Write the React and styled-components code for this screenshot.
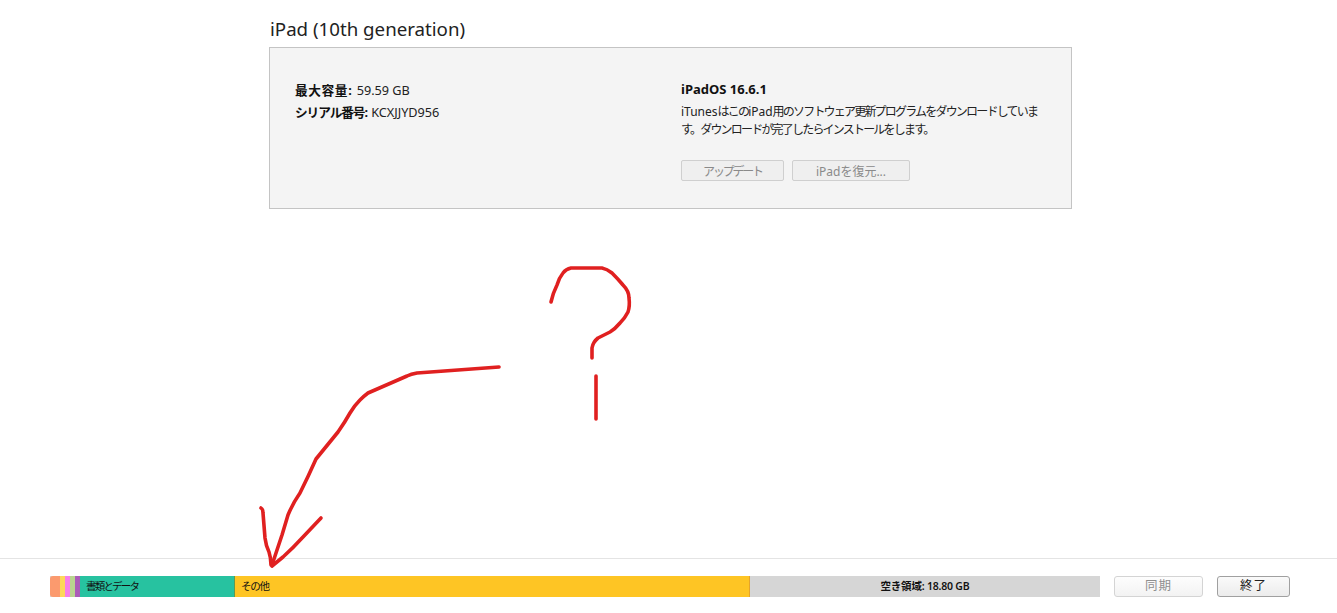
import React from 'react'
import styled, { createGlobalStyle } from 'styled-components'

const GlobalStyle = createGlobalStyle`
  html, body {
    margin: 0;
    padding: 0;
    background: #fff;
    overflow: hidden;
  }
  body {
    font-family: "Noto Sans", "Noto Sans CJK JP", sans-serif;
    color: #111;
  }
`

const segments = [
  { label: '', width: 9.5, color: '#fb9a6e', first: true },
  { label: '', width: 5.5, color: '#fdd85a' },
  { label: '', width: 5, color: '#f77fe8' },
  { label: '', width: 5, color: '#b9d58f' },
  { label: '', width: 5, color: '#ab5cb8' },
  { label: '書類とデータ', width: 155, color: '#27c2a0', edge: '#5f9a52', spacing: -1.8 },
  { label: 'その他', width: 515, color: '#fec524', edge: '#e5a42a', spacing: -1.2 },
]

export default function App() {
  return (
    <Page>
      <GlobalStyle />
      <Main>
        <Title>iPad (10th generation)</Title>
        <Panel>
          <Column>
            <InfoLine><Label $spacing={0.6}>最大容量:</Label> 59.59 GB</InfoLine>
            <InfoLine><Label $spacing={-1.1}>シリアル番号:</Label> KCXJJYD956</InfoLine>
          </Column>
          <Column>
            <OsName>iPadOS 16.6.1</OsName>
            <Message>
              <Latin>iTunes</Latin>はこの<Latin>iPad</Latin>用のソフトウェア更新プログラムをダウンロードしています。ダウンロードが完了したらインストールをします。
            </Message>
            <PanelButtons>
              <PanelButton $w={103} $spacing={-2.2}>アップデート</PanelButton>
              <PanelButton $w={118}>iPadを復元...</PanelButton>
            </PanelButtons>
          </Column>
        </Panel>
      </Main>

      <Footer>
        <StorageBar>
          {segments.map((s, i) => (
            <Segment key={i} $w={s.width} $color={s.color} $edge={s.edge} $first={s.first} $spacing={s.spacing}>
              {s.label}
            </Segment>
          ))}
          <FreeSpace>空き領域: 18.80 GB</FreeSpace>
        </StorageBar>
        <FooterButton $w={89} disabled>同期</FooterButton>
        <FooterButton $w={73} $active>終了</FooterButton>
      </Footer>

      <Scribble viewBox="0 0 1337 613" width="1337" height="613" fill="none">
        <path d="M499 367 L417 373 Q411 374 407 376 L368 393 Q364 396 360 400 Q354 406 350 413 Q345 422 338 432 L316 459 Q308 477 300 493 Q293 503 288 515 Q285 525 282 535 L272 565" />
        <path d="M261 508 Q263 509 263 513 L265 538 Q266 546 269 552 Q271 558 271 565" />
        <path d="M321 518 L303 537 Q293 548 283 557 L272 566" />
        <path d="M551 302 Q553 293 557 285 Q559 278 563 273 Q566 269 571 268 L602 268 Q607 269 612 273 Q618 279 623 285 Q629 291 629 298 Q630 306 628 312 Q625 318 620 323 Q615 329 610 332 Q604 335 598 338 Q593 342 592 348 L592 358" />
        <path d="M596 376 L596 419" />
      </Scribble>
    </Page>
  )
}

const Page = styled.div`
  position: relative;
  width: 1337px;
  height: 613px;
  display: flex;
  flex-direction: column;
  justify-content: space-between;
`

const Main = styled.main`
  padding: 15px 0 0 269px;
  width: 803px;
`

const Title = styled.h1`
  margin: 0 0 5px 1px;
  font-size: 18.7px;
  font-weight: 400;
  line-height: 27px;
  color: #222;
`

const Panel = styled.section`
  box-sizing: border-box;
  width: 803px;
  height: 162px;
  padding: 32px 24px 0 25px;
  display: grid;
  grid-template-columns: 386px 1fr;
  background: #f4f4f4;
  border: 1px solid #c4c4c4;
`

const Column = styled.div`
  display: flex;
  flex-direction: column;
`

const InfoLine = styled.div`
  height: 22px;
  font-size: 12.7px;
  line-height: 20px;
  color: #222;
`

const Label = styled.b`
  font-weight: 700;
  color: #111;
  margin-right: 1px;
  letter-spacing: ${p => p.$spacing || 0}px;
`

const OsName = styled.div`
  font-size: 13px;
  font-weight: 700;
  line-height: 18px;
  margin-bottom: 5px;
`

const Message = styled.p`
  margin: 0;
  width: 366px;
  font-size: 12px;
  line-height: 18px;
  color: #222;
  letter-spacing: -1.8px;
`

const Latin = styled.span`
  letter-spacing: 0;
`

const PanelButtons = styled.div`
  display: flex;
  gap: 8px;
  margin-top: 21px;
`

const PanelButton = styled.div`
  box-sizing: border-box;
  width: ${p => p.$w}px;
  height: 21px;
  display: flex;
  align-items: center;
  justify-content: center;
  font-size: 12px;
  letter-spacing: ${p => p.$spacing || 0}px;
  color: #8a8a8a;
  background: #efefef;
  border: 1px solid #cfcfcf;
  border-radius: 2px;
`

const Footer = styled.footer`
  box-sizing: border-box;
  height: 55px;
  padding: 17px 47px 0 50px;
  display: flex;
  align-items: flex-start;
  gap: 14px;
  border-top: 1px solid #e4e4e4;
`

const StorageBar = styled.div`
  width: 1050px;
  height: 21px;
  display: flex;
  background: #d6d6d6;
  font-size: 10.5px;
  color: #111;
  line-height: 21px;
`

const Segment = styled.div`
  box-sizing: border-box;
  flex: 0 0 ${p => p.$w}px;
  padding-left: ${p => (p.children ? 6 : 0)}px;
  white-space: nowrap;
  background: ${p => p.$color};
  letter-spacing: ${p => p.$spacing || 0}px;
  border-right: ${p => (p.$edge ? `1px solid ${p.$edge}` : 'none')};
  border-radius: ${p => (p.$first ? '3px 0 0 3px' : '0')};
`

const FreeSpace = styled.div`
  flex: 1;
  text-align: center;
  font-weight: 600;
  letter-spacing: -0.2px;
`

const FooterButton = styled.button`
  box-sizing: border-box;
  width: ${p => p.$w}px;
  height: 21px;
  padding: 0;
  font-family: inherit;
  font-size: 12.5px;
  line-height: 1;
  letter-spacing: 1px;
  color: ${p => (p.$active ? '#222' : '#8f8f8f')};
  background: ${p => (p.$active ? 'linear-gradient(#fafafa, #ececec)' : 'linear-gradient(#fdfdfd, #f3f3f3)')};
  border: 1px solid ${p => (p.$active ? '#a0a0a0' : '#d4d4d4')};
  border-radius: 3px;
`

const Scribble = styled.svg`
  position: absolute;
  inset: 0;
  pointer-events: none;
  path {
    stroke: #e02020;
    stroke-width: 3.6;
    stroke-linecap: round;
    stroke-linejoin: round;
  }
`
